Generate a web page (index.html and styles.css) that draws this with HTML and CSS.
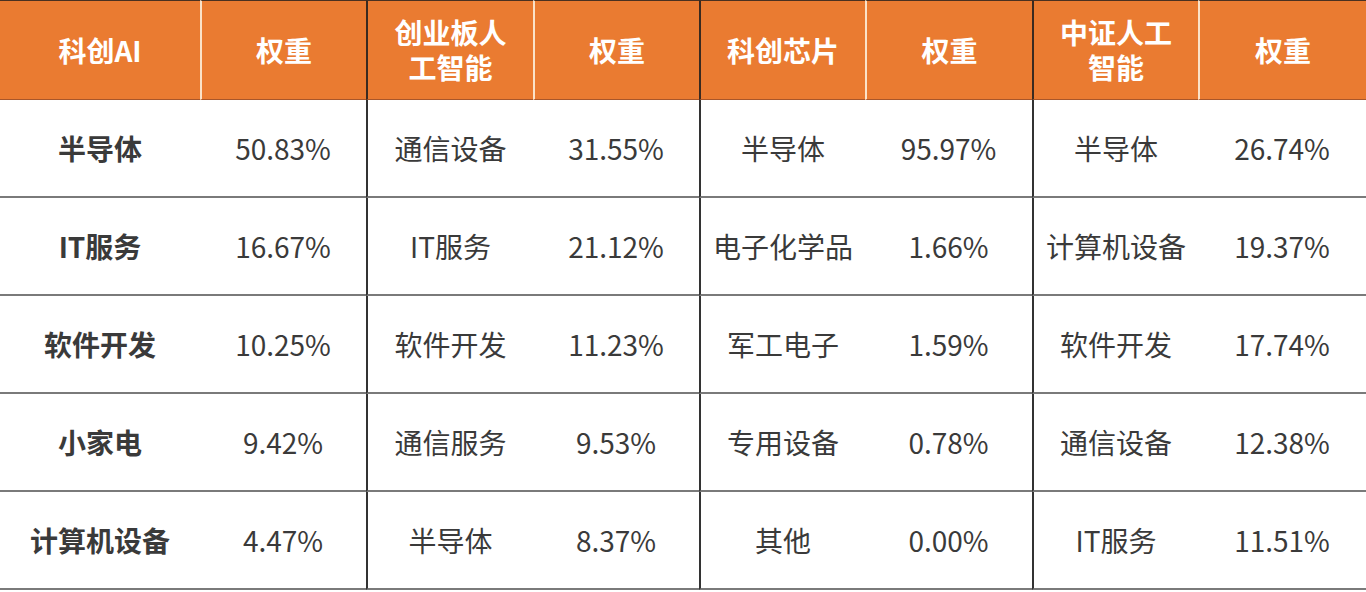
FILE: index.html
```html
<!DOCTYPE html>
<html lang="zh">
<head>
<meta charset="utf-8">
<link rel="stylesheet" href="styles.css">
</head>
<body>
<div class="table">
  <div class="th">科创AI</div>
  <div class="th w">权重</div>
  <div class="th p">创业板人<br>工智能</div>
  <div class="th w">权重</div>
  <div class="th p">科创芯片</div>
  <div class="th w">权重</div>
  <div class="th p">中证人工<br>智能</div>
  <div class="th w">权重</div>

  <div class="td b">半导体</div><div class="td">50.83%</div>
  <div class="td p">通信设备</div><div class="td">31.55%</div>
  <div class="td p">半导体</div><div class="td">95.97%</div>
  <div class="td p">半导体</div><div class="td">26.74%</div>

  <div class="td b">IT服务</div><div class="td">16.67%</div>
  <div class="td p">IT服务</div><div class="td">21.12%</div>
  <div class="td p">电子化学品</div><div class="td">1.66%</div>
  <div class="td p">计算机设备</div><div class="td">19.37%</div>

  <div class="td b">软件开发</div><div class="td">10.25%</div>
  <div class="td p">软件开发</div><div class="td">11.23%</div>
  <div class="td p">军工电子</div><div class="td">1.59%</div>
  <div class="td p">软件开发</div><div class="td">17.74%</div>

  <div class="td b">小家电</div><div class="td">9.42%</div>
  <div class="td p">通信服务</div><div class="td">9.53%</div>
  <div class="td p">专用设备</div><div class="td">0.78%</div>
  <div class="td p">通信设备</div><div class="td">12.38%</div>

  <div class="td b">计算机设备</div><div class="td">4.47%</div>
  <div class="td p">半导体</div><div class="td">8.37%</div>
  <div class="td p">其他</div><div class="td">0.00%</div>
  <div class="td p">IT服务</div><div class="td">11.51%</div>
</div>
</body>
</html>
```
FILE: styles.css
```css
html, body {
  margin: 0;
  padding: 0;
  background: #ffffff;
}
body {
  font-family: "Noto Sans CJK SC", "Noto Sans", sans-serif;
  color: #333333;
}
.table {
  display: grid;
  grid-template-columns: 200px 166px 167px 166px 166px 167px 166px 168px;
  width: 1366px;
}
.th {
  box-sizing: border-box;
  height: 100px;
  background: #ea7b31;
  color: #ffffff;
  font-weight: 700;
  font-size: 28px;
  line-height: 35px;
  border-top: 1px solid #4a3020;
  border-bottom: 1px solid #a8562a;
  display: flex;
  align-items: center;
  justify-content: center;
  text-align: center;
}
.th.w {
  border-left: 2px solid #fbe2c8;
}
.th.p {
  border-left: 2px solid #3a2a20;
}
.td {
  box-sizing: border-box;
  height: 98px;
  border-bottom: 2px solid #7a7a7a;
  display: flex;
  align-items: center;
  justify-content: center;
  font-size: 28px;
  line-height: 40px;
  color: #3a3a3a;
}
.td.b {
  font-weight: 700;
}
.td.p {
  border-left: 2px solid #333333;
}
```
